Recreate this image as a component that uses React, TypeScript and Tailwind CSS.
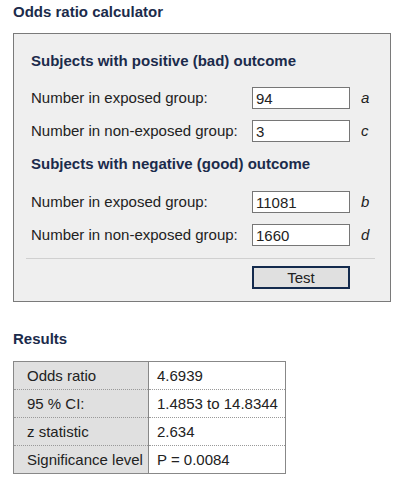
import React from "react";

const font = { fontFamily: '"Liberation Sans", Arial, sans-serif' };

function Row({ label, value, letter }: { label: string; value: string; letter: string }) {
  return (
    <div className="flex h-[22px] items-center">
      <div className="w-[221px] text-[15px] leading-[18px] text-[#222]">{label}</div>
      <input
        readOnly
        value={value}
        className="h-[22px] w-[98px] border border-[#767676] bg-white px-[3px] text-[15px] leading-[18px] text-[#222] outline-none"
      />
      <div className="ml-[11px] text-[15px] italic leading-[18px] text-[#222]">{letter}</div>
    </div>
  );
}

export default function App() {
  const results: [string, string][] = [
    ["Odds ratio", "4.6939"],
    ["95 % CI:", "1.4853 to 14.8344"],
    ["z statistic", "2.634"],
    ["Significance level", "P = 0.0084"],
  ];
  return (
    <div className="h-[483px] w-[398px] bg-white" style={font}>
      <div className="ml-[13px] pt-[3px] text-[15px] font-bold leading-[18px] text-[#1b2b4b]">
        Odds ratio calculator
      </div>
      <div className="ml-[13px] mt-[12px] w-[378px] border border-[#7a7a7a] bg-[#efefef] pb-[12px] pt-[18px]">
        <div className="ml-[17px] text-[15px] font-bold leading-[18px] text-[#1b2b4b]">
          Subjects with positive (bad) outcome
        </div>
        <div className="ml-[17px] mt-[17px] flex flex-col gap-[11px]">
          <Row label="Number in exposed group:" value="94" letter="a" />
          <Row label="Number in non-exposed group:" value="3" letter="c" />
        </div>
        <div className="ml-[17px] mt-[13px] text-[15px] font-bold leading-[18px] text-[#1b2b4b]">
          Subjects with negative (good) outcome
        </div>
        <div className="ml-[17px] mt-[18px] flex flex-col gap-[11px]">
          <Row label="Number in exposed group:" value="11081" letter="b" />
          <Row label="Number in non-exposed group:" value="1660" letter="d" />
        </div>
        <div className="ml-[12px] mt-[12px] h-px w-[349px] bg-[#d0d0d0]" />
        <div className="ml-[238px] mt-[7px]">
          <button className="flex h-[23px] w-[98px] items-center justify-center border-2 border-[#132a4d] bg-[#e0e0e0] text-[15px] leading-[18px] text-[#222]">
            Test
          </button>
        </div>
      </div>
      <div className="ml-[13px] mt-[28px] text-[15px] font-bold leading-[18px] text-[#1b2b4b]">Results</div>
      <table className="ml-[13px] mt-[13px] w-[273px] border-collapse border border-[#888] text-[15px] leading-[18px] text-[#222]">
        <tbody>
          {results.map(([k, v], i) => (
            <tr key={k} className={i < results.length - 1 ? "h-[28px] border-b border-dotted border-[#999]" : "h-[28px]"}>
              <td className="w-[135px] border-r border-[#888] bg-[#e0e0e0] pl-[13px] pr-[4px]">{k}</td>
              <td className="bg-white pl-[8px]">{v}</td>
            </tr>
          ))}
        </tbody>
      </table>
    </div>
  );
}
